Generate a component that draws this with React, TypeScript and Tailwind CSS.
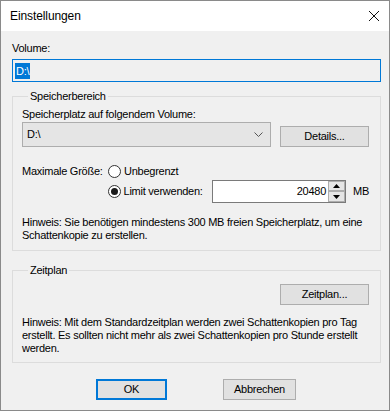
import React from "react";

const font = { fontFamily: '"Liberation Sans", Arial, sans-serif' };

function Radio({ checked }: { checked?: boolean }) {
  return (
    <span className="flex h-[13px] w-[13px] shrink-0 items-center justify-center rounded-full border border-[#333333] bg-white">
      {checked && <span className="h-[7px] w-[7px] rounded-full bg-[#1a1a1a]" />}
    </span>
  );
}

function Btn({ children, className = "" }: { children: React.ReactNode; className?: string }) {
  return (
    <div
      className={
        "flex h-[21px] shrink-0 items-center justify-center border border-[#adadad] bg-[#e1e1e1] leading-[15px] text-black " +
        className
      }
    >
      {children}
    </div>
  );
}

export default function App() {
  return (
    <div
      className="h-[412px] w-[391px] overflow-hidden whitespace-nowrap bg-white text-[11px] tracking-[-0.25px] text-black"
      style={font}
    >
      <div className="flex h-[411px] w-[390px] flex-col border border-[#8a8a8a]">
        {/* Title bar */}
        <div className="flex h-[30px] shrink-0 items-center justify-between bg-white pl-[9px] pr-[8px]">
          <span className="text-[12px] leading-[15px] tracking-[-0.1px]">Einstellungen</span>
          <svg width="12" height="12" viewBox="0 0 12 12" className="mr-[1px]">
            <path d="M1 1 L11 11 M11 1 L1 11" stroke="#111" strokeWidth="1" fill="none" />
          </svg>
        </div>

        {/* Content */}
        <div className="flex flex-1 flex-col bg-[#f0f0f0] pl-[11px] pr-[8px] pt-[10px] leading-[15px]">
          <div>Volume:</div>
          <div className="mt-[3px] flex h-[23px] items-center border border-[#0078d7] bg-[#f0f0f0] pl-[2px]">
            <span className="bg-[#0078d7] px-[1px] leading-[16px] text-white">D:\</span>
          </div>

          {/* Speicherbereich */}
          <fieldset className="mt-[7px] min-w-0 border border-[#dcdcdc] pb-[8px] pl-[9px] pr-[11px]">
            <legend className="ml-[6px] px-[2px] leading-[15px]">Speicherbereich</legend>
            <div className="mt-[3px]">Speicherplatz auf folgendem Volume:</div>
            <div className="flex items-end">
              <div className="flex h-[25px] w-[249px] items-center justify-between border border-[#adadad] bg-[#e5e5e5] pl-[4px] pr-[7px]">
                <span>D:\</span>
                <svg width="9" height="5" viewBox="0 0 9 5">
                  <path d="M0.5 0.5 L4.5 4.5 L8.5 0.5" stroke="#555" strokeWidth="1" fill="none" />
                </svg>
              </div>
              <Btn className="ml-[9px] w-[89px]">Details...</Btn>
            </div>

            <div className="mt-[16px] flex h-[17px] items-center">
              <span className="w-[86px]">Maximale Größe:</span>
              <Radio />
              <span className="ml-[3px]">Unbegrenzt</span>
            </div>
            <div className="flex h-[23px] items-center">
              <span className="w-[86px]" />
              <Radio checked />
              <span className="ml-[3px] w-[89px]">Limit verwenden:</span>
              <div className="flex h-[23px] w-[134px] shrink-0 items-center border border-[#7a7a7a] bg-white">
                <span className="flex-1 pr-[2px] text-right">20480</span>
                <div className="flex h-[21px] w-[17px] flex-col">
                  <div className="flex h-[10px] items-center justify-center border border-[#adadad] bg-[#e5e5e5]">
                    <svg width="7" height="4" viewBox="0 0 7 4">
                      <path d="M0 4 L3.5 0 L7 4 Z" fill="#000" />
                    </svg>
                  </div>
                  <div className="flex h-[11px] items-center justify-center border border-[#adadad] bg-[#e5e5e5]">
                    <svg width="7" height="4" viewBox="0 0 7 4">
                      <path d="M0 0 L3.5 4 L7 0 Z" fill="#000" />
                    </svg>
                  </div>
                </div>
              </div>
              <span className="ml-[7px]">MB</span>
            </div>

            <div className="mt-[13px] leading-[13px]">
              Hinweis: Sie benötigen mindestens 300 MB freien Speicherplatz, um eine
              <br />
              Schattenkopie zu erstellen.
            </div>
          </fieldset>

          {/* Zeitplan */}
          <fieldset className="mt-[12px] min-w-0 border border-[#dcdcdc] pb-[7px] pl-[9px] pr-[11px]">
            <legend className="ml-[6px] px-[2px] leading-[15px]">Zeitplan</legend>
            <div className="mt-[6px] flex justify-end">
              <Btn className="w-[89px]">Zeitplan...</Btn>
            </div>
            <div className="mt-[11px] leading-[13px]">
              Hinweis: Mit dem Standardzeitplan werden zwei Schattenkopien pro Tag
              <br />
              erstellt. Es sollten nicht mehr als zwei Schattenkopien pro Stunde erstellt
              <br />
              werden.
            </div>
          </fieldset>

          <div className="mt-[16px] flex gap-[56px] pl-[84px]">
            <div className="flex h-[21px] w-[71px] items-center justify-center border-2 border-[#0078d7] bg-[#e1e1e1]">
              OK
            </div>
            <Btn className="w-[73px]">Abbrechen</Btn>
          </div>
        </div>
      </div>
    </div>
  );
}
